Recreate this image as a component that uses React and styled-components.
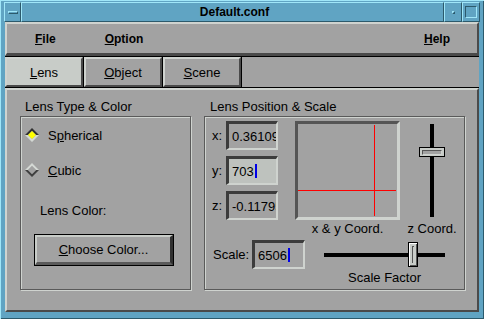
import React from 'react'
import styled, { createGlobalStyle } from 'styled-components'

const c = {
  face: '#a2a2a2',
  light: '#cfd3cf',
  dark: '#4a4a4a',
  select: '#c8ccc8',
  focus: '#bec2be',
  frame: '#60a4c3',
  frameLight: '#a0e6f8',
  frameDark: '#2c5a6c',
}

const GlobalStyle = createGlobalStyle`
  * { box-sizing: border-box; }
  body {
    margin: 0;
    background: ${c.frame};
    font-family: "Liberation Sans", Arial, sans-serif;
    font-size: 13px;
    color: #000;
  }
`

const App = () => {
  return (
    <>
      <GlobalStyle />
      <Frame>
        <TitleBar>
          <WinMenuBtn><Dash /></WinMenuBtn>
          <Title>Default.conf</Title>
          <WinBtn><Dot /></WinBtn>
          <WinBtn><MaxBox /></WinBtn>
        </TitleBar>
        <Client>
          <MenuBar>
            <MenuItem><u>F</u>ile</MenuItem>
            <MenuItem $gap={49}><u>O</u>ption</MenuItem>
            <MenuItem $right><u>H</u>elp</MenuItem>
          </MenuBar>
          <TabStrip>
            <TabList>
              <Tab $active><u>L</u>ens</Tab>
              <Tab><u>O</u>bject</Tab>
              <Tab><u>S</u>cene</Tab>
            </TabList>
          </TabStrip>
          <Panel>
            <Group $width={171}>
              <Legend>Lens Type &amp; Color</Legend>
              <LeftBox>
                <Radio>
                  <Diamond checked />
                  <span>S<u>p</u>herical</span>
                </Radio>
                <Radio $top={11}>
                  <Diamond />
                  <span><u>C</u>ubic</span>
                </Radio>
                <ColorLabel>Lens Color:</ColorLabel>
                <PushButton><u>C</u>hoose Color...</PushButton>
              </LeftBox>
            </Group>
            <Group $width={261}>
              <Legend $indent={6}>Lens Position &amp; Scale</Legend>
              <RightBox>
                <TopRow>
                  <FieldColumn>
                    <FieldRow>
                      <AxisLabel>x:</AxisLabel>
                      <Field>0.36109</Field>
                    </FieldRow>
                    <FieldRow>
                      <AxisLabel>y:</AxisLabel>
                      <Field $focus>703<Caret /></Field>
                    </FieldRow>
                    <FieldRow>
                      <AxisLabel>z:</AxisLabel>
                      <Field>-0.11795</Field>
                    </FieldRow>
                  </FieldColumn>
                  <CanvasColumn>
                    <Canvas>
                      <svg width="99" height="93">
                        <line x1="76.5" y1="1" x2="76.5" y2="92" stroke="#ff0000" strokeWidth="1" />
                        <line x1="0" y1="66.5" x2="98" y2="66.5" stroke="#ff0000" strokeWidth="1" />
                      </svg>
                    </Canvas>
                    <Caption>x &amp; y Coord.</Caption>
                  </CanvasColumn>
                  <SliderColumn>
                    <VTrackArea>
                      <VTrack />
                      <VThumb><ThumbGroove /></VThumb>
                    </VTrackArea>
                    <Caption>z Coord.</Caption>
                  </SliderColumn>
                </TopRow>
                <BottomRow>
                  <ScaleLabel>Scale:</ScaleLabel>
                  <Field $width={53}>6506<Caret /></Field>
                  <HSliderColumn>
                    <HTrackArea>
                      <HTrack />
                      <HThumb />
                    </HTrackArea>
                    <Caption>Scale Factor</Caption>
                  </HSliderColumn>
                </BottomRow>
              </RightBox>
            </Group>
          </Panel>
        </Client>
      </Frame>
    </>
  )
}

export default App

const Frame = styled.div`
  width: 484px;
  height: 319px;
  display: flex;
  flex-direction: column;
  padding: 2px 4px 0 4px;
  background: ${c.frame};
  box-shadow: inset 1px 1px 0 ${c.frameLight}, inset -1px -1px 0 ${c.frameDark};
`

const TitleBar = styled.div`
  display: flex;
  height: 20px;
`

const raisedFrame = `
  border: 1px solid;
  border-color: ${c.frameLight} ${c.frameDark} ${c.frameDark} ${c.frameLight};
  background: ${c.frame};
`

const WinMenuBtn = styled.div`
  ${raisedFrame}
  width: 17px;
  display: flex;
  align-items: center;
  justify-content: center;
`

const Dash = styled.span`
  display: block;
  width: 10px;
  height: 3px;
  border: 1px solid;
  border-color: ${c.frameLight} ${c.frameDark} ${c.frameDark} ${c.frameLight};
`

const Title = styled.div`
  ${raisedFrame}
  flex: 1;
  display: flex;
  align-items: center;
  justify-content: center;
  font-weight: bold;
  font-size: 12px;
  padding-left: 4px;
`

const WinBtn = styled.div`
  ${raisedFrame}
  width: 18px;
  display: flex;
  align-items: center;
  justify-content: center;
`

const Dot = styled.span`
  display: block;
  width: 3px;
  height: 3px;
  border: 1px solid;
  border-color: ${c.frameLight} ${c.frameDark} ${c.frameDark} ${c.frameLight};
`

const MaxBox = styled.span`
  display: block;
  width: 12px;
  height: 12px;
  border: 1px solid;
  border-color: ${c.frameDark} ${c.frameLight} ${c.frameLight} ${c.frameDark};
`

const Client = styled.div`
  flex: 1;
  margin: 0 1px 7px 1px;
  display: flex;
  flex-direction: column;
  background: ${c.face};
`

const MenuBar = styled.div`
  height: 34px;
  display: flex;
  align-items: center;
  padding: 0 27px 0 28px;
  border-style: solid;
  border-width: 2px 2px 3px 2px;
  border-color: ${c.light} ${c.dark} ${c.dark} ${c.light};
  font-weight: bold;
  font-size: 12px;
`

const MenuItem = styled.span`
  margin-left: ${p => (p.$right ? 'auto' : `${p.$gap || 0}px`)};
`

const TabStrip = styled.div`
  height: 32px;
  border-top: 1px solid #000;
  border-bottom: 1px solid #000;
  display: flex;
`

const TabList = styled.div`
  display: flex;
  gap: 1px;
  padding-right: 1px;
  background: #000;
`

const Tab = styled.div`
  width: 78px;
  display: flex;
  align-items: center;
  justify-content: center;
  background: ${p => (p.$active ? c.select : c.face)};
  border-style: solid;
  border-width: 2px 2px 2px 2px;
  border-color: ${c.light} ${c.dark} ${c.dark} ${c.light};
`

const Panel = styled.div`
  flex: 1;
  display: flex;
  gap: 13px;
  padding: 10px 0 0 13px;
  border-style: solid;
  border-width: 2px;
  border-color: ${c.light} ${c.dark} ${c.dark} ${c.light};
`

const Group = styled.div`
  width: ${p => p.$width}px;
  display: flex;
  flex-direction: column;
`

const Legend = styled.div`
  height: 14px;
  line-height: 14px;
  margin: 0 0 2px ${p => p.$indent || 5}px;
`

const etched = `
  border: 1px solid #5a5a5a;
  box-shadow: inset 1px 1px 0 ${c.light}, 1px 1px 0 ${c.light};
`

const LeftBox = styled.div`
  ${etched}
  height: 174px;
  display: flex;
  flex-direction: column;
  align-items: flex-start;
  padding: 6px 0 0 4px;
`

const Radio = styled.div`
  height: 24px;
  margin-top: ${p => p.$top || 0}px;
  display: flex;
  align-items: center;
  gap: 9px;
`

const Diamond = ({ checked }) => (
  <svg width="14" height="14" viewBox="0 0 14 14">
    <polygon points="0,7 7,0 14,7 11,7 7,3 3,7" fill={checked ? '#303030' : '#d4d8d4'} />
    <polygon points="0,7 3,7 7,11 11,7 14,7 7,14" fill={checked ? '#d4d8d4' : '#404040'} />
    <polygon points="3,7 7,3 11,7 7,11" fill={checked ? '#ffff00' : c.face} />
  </svg>
)

const ColorLabel = styled.div`
  height: 14px;
  line-height: 14px;
  margin: 22px 0 0 15px;
`

const PushButton = styled.div`
  width: 138px;
  height: 30px;
  margin: 17px 0 0 10px;
  display: flex;
  align-items: center;
  justify-content: center;
  background: ${c.face};
  outline: 1px solid #000;
  border-style: solid;
  border-width: 2px 3px 3px 2px;
  border-color: ${c.select} #303030 #5a5a5a ${c.select};
`

const RightBox = styled.div`
  ${etched}
  height: 174px;
  padding: 4px 0 0 7px;
  display: flex;
  flex-direction: column;
`

const TopRow = styled.div`
  display: flex;
  align-items: flex-start;
`

const FieldColumn = styled.div`
  display: flex;
  flex-direction: column;
  gap: 6px;
`

const FieldRow = styled.div`
  display: flex;
  align-items: center;
`

const AxisLabel = styled.span`
  width: 14px;
`

const Field = styled.div`
  width: ${p => p.$width || 52}px;
  height: 29px;
  display: flex;
  align-items: center;
  padding-left: 3px;
  overflow: hidden;
  white-space: nowrap;
  background: ${p => (p.$focus ? c.focus : c.face)};
  border-style: solid;
  border-width: 3px 2px 2px 3px;
  border-color: #3c3c3c ${c.light} ${c.light} #3c3c3c;
`

const Caret = styled.span`
  display: inline-block;
  width: 2px;
  height: 14px;
  margin-left: 1px;
  background: #0000e8;
`

const CanvasColumn = styled.div`
  margin-left: 17px;
  display: flex;
  flex-direction: column;
  align-items: center;
`

const Canvas = styled.div`
  width: 105px;
  height: 99px;
  border-style: solid;
  border-width: 3px;
  border-color: #555 ${c.light} ${c.light} #555;
  background: ${c.face};
  line-height: 0;
`

const Caption = styled.div`
  margin-top: 2px;
  height: 14px;
  line-height: 14px;
  white-space: nowrap;
`

const SliderColumn = styled.div`
  width: 50px;
  margin-left: 7px;
  display: flex;
  flex-direction: column;
  align-items: center;
`

const VTrackArea = styled.div`
  position: relative;
  width: 26px;
  height: 99px;
  display: flex;
  justify-content: center;
  padding-top: 3px;
`

const VTrack = styled.div`
  width: 4px;
  height: 93px;
  background: #000;
`

const VThumb = styled.div`
  position: absolute;
  left: 0;
  top: 26px;
  width: 26px;
  height: 10px;
  background: ${c.select};
  border: 1px solid #000;
  padding: 2px 2px 1px 2px;
`

const ThumbGroove = styled.div`
  height: 100%;
  border: 1px solid;
  border-color: #555 ${c.light} ${c.light} #555;
  background: ${c.face};
`

const BottomRow = styled.div`
  display: flex;
  align-items: flex-start;
  margin-top: 4px;
`

const ScaleLabel = styled.span`
  width: 40px;
  height: 29px;
  line-height: 29px;
  padding-left: 1px;
`

const HSliderColumn = styled.div`
  margin-left: 19px;
  width: 121px;
  display: flex;
  flex-direction: column;
  align-items: center;
`

const HTrackArea = styled.div`
  position: relative;
  width: 121px;
  height: 29px;
  display: flex;
  align-items: center;
`

const HTrack = styled.div`
  width: 100%;
  height: 4px;
  background: #000;
`

const HThumb = styled.div`
  position: absolute;
  left: 84px;
  top: 2px;
  width: 10px;
  height: 25px;
  background: ${c.select};
  border: 1px solid #000;
  box-shadow: inset 1px 1px 0 #fff, inset -1px -1px 0 #555, inset 3px 3px 0 ${c.select}, inset -3px -3px 0 ${c.select}, inset 4px 4px 0 #555;
`
